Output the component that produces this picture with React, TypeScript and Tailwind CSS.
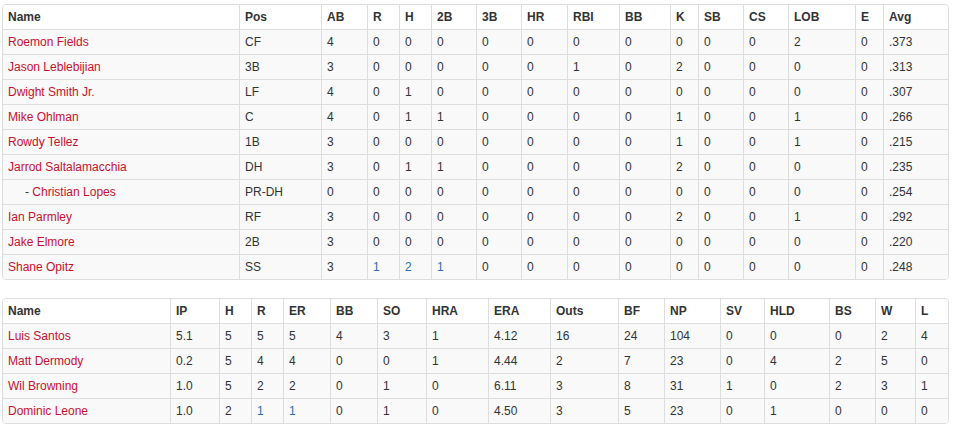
import React from "react";

type Cell = string | { v: string; blue: true };

const battingHead = ["Name", "Pos", "AB", "R", "H", "2B", "3B", "HR", "RBI", "BB", "K", "SB", "CS", "LOB", "E", "Avg"];
const battingW = [236, 82, 46, 32, 32, 45, 45, 46, 52, 51, 28, 45, 45, 67, 28, 65];
const B = (v: string): Cell => ({ v, blue: true });

const batting: { name: string; sub?: boolean; cells: Cell[] }[] = [
  { name: "Roemon Fields", cells: ["CF", "4", "0", "0", "0", "0", "0", "0", "0", "0", "0", "0", "2", "0", ".373"] },
  { name: "Jason Leblebijian", cells: ["3B", "3", "0", "0", "0", "0", "0", "1", "0", "2", "0", "0", "0", "0", ".313"] },
  { name: "Dwight Smith Jr.", cells: ["LF", "4", "0", "1", "0", "0", "0", "0", "0", "0", "0", "0", "0", "0", ".307"] },
  { name: "Mike Ohlman", cells: ["C", "4", "0", "1", "1", "0", "0", "0", "0", "1", "0", "0", "1", "0", ".266"] },
  { name: "Rowdy Tellez", cells: ["1B", "3", "0", "0", "0", "0", "0", "0", "0", "1", "0", "0", "1", "0", ".215"] },
  { name: "Jarrod Saltalamacchia", cells: ["DH", "3", "0", "1", "1", "0", "0", "0", "0", "2", "0", "0", "0", "0", ".235"] },
  { name: "Christian Lopes", sub: true, cells: ["PR-DH", "0", "0", "0", "0", "0", "0", "0", "0", "0", "0", "0", "0", "0", ".254"] },
  { name: "Ian Parmley", cells: ["RF", "3", "0", "0", "0", "0", "0", "0", "0", "2", "0", "0", "1", "0", ".292"] },
  { name: "Jake Elmore", cells: ["2B", "3", "0", "0", "0", "0", "0", "0", "0", "0", "0", "0", "0", "0", ".220"] },
  { name: "Shane Opitz", cells: ["SS", "3", B("1"), B("2"), B("1"), "0", "0", "0", "0", "0", "0", "0", "0", "0", ".248"] },
];

const pitchHead = ["Name", "IP", "H", "R", "ER", "BB", "SO", "HRA", "ERA", "Outs", "BF", "NP", "SV", "HLD", "BS", "W", "L"];
const pitchW = [167, 49, 32, 32, 47, 47, 49, 62, 62, 68, 46, 56, 44, 65, 46, 40, 33];
const pitching: { name: string; sub?: boolean; cells: Cell[] }[] = [
  { name: "Luis Santos", cells: ["5.1", "5", "5", "5", "4", "3", "1", "4.12", "16", "24", "104", "0", "0", "0", "2", "4"] },
  { name: "Matt Dermody", cells: ["0.2", "5", "4", "4", "0", "0", "1", "4.44", "2", "7", "23", "0", "4", "2", "5", "0"] },
  { name: "Wil Browning", cells: ["1.0", "5", "2", "2", "0", "1", "0", "6.11", "3", "8", "31", "1", "0", "2", "3", "1"] },
  { name: "Dominic Leone", cells: ["1.0", "2", B("1"), B("1"), "0", "1", "0", "4.50", "3", "5", "23", "0", "1", "0", "0", "0"] },
];

function StatTable({
  head,
  widths,
  rows,
  className,
}: {
  head: string[];
  widths: number[];
  rows: { name: string; sub?: boolean; cells: Cell[] }[];
  className?: string;
}) {
  return (
    <div className={"w-[947px] border border-[#dddddd] rounded-[4px] overflow-hidden " + (className ?? "")}>
      <table className="table-fixed border-separate border-spacing-0 w-[945px] text-[12px] leading-[14px] text-[#333333]">
        <thead>
          <tr className="bg-white">
            {head.map((h, i) => (
              <th
                key={h + i}
                style={{ width: widths[i] }}
                className={"text-left font-bold px-[5px] py-[5px] " + (i > 0 ? "border-l border-[#dddddd]" : "")}
              >
                {h}
              </th>
            ))}
          </tr>
        </thead>
        <tbody>
          {rows.map((r) => (
            <tr key={r.name} className="bg-[#f9f9f9]">
              <td className="px-[5px] py-[5px] border-t border-[#dddddd] whitespace-nowrap">
                {r.sub ? (
                  <span className="pl-[17px]">
                    - <span className="text-[#c8102e]">{r.name}</span>
                  </span>
                ) : (
                  <span className="text-[#c8102e]">{r.name}</span>
                )}
              </td>
              {r.cells.map((c, i) => (
                <td key={i} className="px-[5px] py-[5px] border-t border-l border-[#dddddd] whitespace-nowrap">
                  {typeof c === "string" ? c : <span className="text-[#2a6fb5]">{c.v}</span>}
                </td>
              ))}
            </tr>
          ))}
        </tbody>
      </table>
    </div>
  );
}

export default function App() {
  return (
    <div className="w-[953px] h-[429px] bg-white pt-[4px] pl-[2px]" style={{ fontFamily: '"Liberation Sans", Arial, sans-serif' }}>
      <StatTable head={battingHead} widths={battingW} rows={batting} />
      <StatTable head={pitchHead} widths={pitchW} rows={pitching} className="mt-[18px]" />
    </div>
  );
}
